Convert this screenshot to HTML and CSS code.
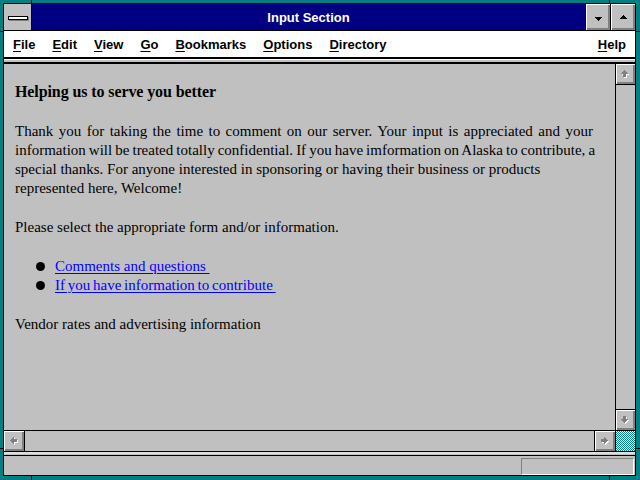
FILE: index.html
```html
<!DOCTYPE html>
<html>
<head>
<meta charset="utf-8">
<title>Input Section</title>
<link rel="stylesheet" href="styles.css">
</head>
<body>
<div class="win">
  <span class="notch notch-t1"></span>
  <span class="notch notch-t2"></span>
  <span class="notch notch-b1"></span>
  <span class="notch notch-b2"></span>
  <span class="notch notch-l1"></span>
  <span class="notch notch-l2"></span>
  <span class="notch notch-r1"></span>
  <span class="notch notch-r2"></span>
  <div class="inner">
    <div class="titlebar">
      <div class="sysmenu"><span class="sysbar"></span></div>
      <div class="caption">Input Section</div>
      <div class="tbtn tbtn-min">
        <svg width="7" height="4" viewBox="0 0 7 4" shape-rendering="crispEdges"><polygon points="0,0 7,0 3.5,4" fill="#000"/></svg>
      </div>
      <div class="tbtn tbtn-max">
        <svg width="7" height="4" viewBox="0 0 7 4" shape-rendering="crispEdges"><polygon points="3.5,0 7,4 0,4" fill="#000"/></svg>
      </div>
    </div>
    <div class="menubar">
      <div class="menus">
        <span class="mi"><u>F</u>ile</span>
        <span class="mi"><u>E</u>dit</span>
        <span class="mi"><u>V</u>iew</span>
        <span class="mi"><u>G</u>o</span>
        <span class="mi"><u>B</u>ookmarks</span>
        <span class="mi"><u>O</u>ptions</span>
        <span class="mi"><u>D</u>irectory</span>
      </div>
      <span class="mi help"><u>H</u>elp</span>
    </div>
    <div class="sep"></div>
    <div class="main">
      <div class="content">
        <h1 class="heading">Helping us to serve you better</h1>
        <p class="para"><span class="ln ln1">Thank you for taking the time to comment on our server. Your input is appreciated and your</span><br><span class="ln ln2">information will be treated totally confidential. If you have imformation on Alaska to contribute, a</span><br>special thanks. For anyone interested in sponsoring or having their business or products<br>represented here, Welcome!</p>
        <p class="para">Please select the appropriate form and/or information.</p>
        <ul class="links">
          <li><span class="dot"></span><a href="#">Comments and questions&nbsp;</a></li>
          <li><span class="dot"></span><a href="#" class="tight">If you have information to contribute&nbsp;</a></li>
        </ul>
        <p class="para">Vendor rates and advertising information</p>
      </div>
      <div class="vscroll">
        <div class="sbtn sbtn-v">
          <svg width="9" height="9" viewBox="0 0 9 9" shape-rendering="crispEdges"><polygon transform="translate(1,1)" points="3.5,0 7,4 5,4 5,7 2,7 2,4 0,4" fill="#fff"/><polygon points="3.5,0 7,4 5,4 5,7 2,7 2,4 0,4" fill="#808080"/></svg>
        </div>
        <div class="vtrack"></div>
        <div class="sbtn sbtn-v sbtn-down">
          <svg width="9" height="9" viewBox="0 0 9 9" shape-rendering="crispEdges"><polygon transform="translate(1,1)" points="2,0 5,0 5,3 7,3 3.5,7 0,3 2,3" fill="#fff"/><polygon points="2,0 5,0 5,3 7,3 3.5,7 0,3 2,3" fill="#808080"/></svg>
        </div>
      </div>
    </div>
    <div class="hscroll">
      <div class="sbtn sbtn-h sbtn-left">
        <svg width="9" height="9" viewBox="0 0 9 9" shape-rendering="crispEdges"><polygon transform="translate(1,1)" points="0,3.5 4,0 4,2 7,2 7,5 4,5 4,7" fill="#fff"/><polygon points="0,3.5 4,0 4,2 7,2 7,5 4,5 4,7" fill="#808080"/></svg>
      </div>
      <div class="htrack"></div>
      <div class="sbtn sbtn-h sbtn-right">
        <svg width="9" height="9" viewBox="0 0 9 9" shape-rendering="crispEdges"><polygon transform="translate(1,1)" points="7,3.5 3,0 3,2 0,2 0,5 3,5 3,7" fill="#fff"/><polygon points="7,3.5 3,0 3,2 0,2 0,5 3,5 3,7" fill="#808080"/></svg>
      </div>
      <div class="corner"></div>
    </div>
    <div class="sep2"></div>
    <div class="status">
      <div class="statbox"></div>
    </div>
  </div>
</div>
</body>
</html>
```

FILE: styles.css
```css
html, body {
  margin: 0;
  padding: 0;
  background: #008080;
}

.win {
  position: relative;
  width: 640px;
  height: 480px;
  box-sizing: border-box;
  padding: 3px 4px 4px 3px;
  background: #008080;
}

.notch {
  position: absolute;
  background: #000;
}
.notch-t1 { left: 31px; top: 0; width: 1px; height: 3px; }
.notch-t2 { left: 609px; top: 0; width: 1px; height: 3px; }
.notch-b1 { left: 31px; bottom: 0; width: 1px; height: 4px; }
.notch-b2 { left: 609px; bottom: 0; width: 1px; height: 4px; }
.notch-l1 { left: 0; top: 31px; width: 3px; height: 1px; }
.notch-l2 { left: 0; top: 448px; width: 3px; height: 1px; }
.notch-r1 { right: 0; top: 31px; width: 4px; height: 1px; }
.notch-r2 { right: 0; top: 448px; width: 4px; height: 1px; }

.inner {
  height: 100%;
  box-sizing: border-box;
  border: 1px solid #000;
  background: #c0c0c0;
  display: flex;
  flex-direction: column;
}

/* Title bar */
.titlebar {
  height: 26px;
  border-bottom: 1px solid #000;
  background: #000080;
  display: flex;
  flex: none;
}
.sysmenu {
  width: 27px;
  border-right: 1px solid #000;
  background: #c0c0c0;
  display: flex;
  align-items: center;
  justify-content: center;
}
.sysbar {
  width: 18px;
  height: 2px;
  background: #fff;
  border: 1px solid #000;
  box-shadow: 1px 1px 0 #808080;
  margin-top: 1px;
}
.caption {
  flex: 1;
  color: #fff;
  font-family: "Liberation Sans", Arial, sans-serif;
  font-weight: bold;
  font-size: 13px;
  padding-top: 2px;
  line-height: 24px;
  text-align: center;
}
.tbtn {
  width: 24px;
  border-left: 1px solid #000;
  background: #c0c0c0;
  box-shadow: inset 1px 1px #fff, inset -1px -1px #808080, inset -2px -2px #808080;
  display: flex;
  align-items: center;
  justify-content: center;
}
.tbtn svg { display: block; }
.tbtn-min svg { margin-top: 3px; }
.tbtn-max svg { margin-top: -1px; }

/* Menu bar */
.menubar {
  height: 26px;
  flex: none;
  background: #fff;
  display: flex;
  justify-content: space-between;
  align-items: center;
  padding: 0 9px 0 9px;
  font-family: "Liberation Sans", Arial, sans-serif;
  font-weight: bold;
  font-size: 13px;
  color: #000;
}
.menus {
  display: flex;
  gap: 17px;
}
.mi u {
  text-decoration-thickness: 1px;
  text-underline-offset: 2px;
}

.sep {
  flex: none;
  height: 3px;
  border-top: 2px solid #000;
  border-bottom: 2px solid #000;
  background: #c0c0c0;
  box-shadow: inset 0 1px #fff;
}

/* Main area */
.main {
  flex: 1;
  display: flex;
  min-height: 0;
}
.content {
  flex: 1;
  overflow: hidden;
  padding: 18px 0 0 11px;
  font-family: "Liberation Serif", "Times New Roman", serif;
  font-size: 15px;
  line-height: 19px;
  color: #000;
  white-space: nowrap;
}
.heading {
  margin: 0 0 21px;
  font-size: 16px;
  font-weight: bold;
  line-height: 19px;
  letter-spacing: -0.1px;
}
.para {
  margin: 0 0 20px;
}
.ln1 {
  word-spacing: 1.7px;
}
.ln2 {
  word-spacing: -0.7px;
}
.links {
  list-style: none;
  margin: 0 0 20px;
  padding: 0 0 0 21px;
}
.links li {
  display: flex;
  align-items: center;
  height: 19px;
}
.dot {
  width: 9px;
  height: 9px;
  border-radius: 50%;
  background: #000;
  margin-right: 10px;
}
.links a {
  color: #0000ff;
  text-decoration: underline;
  text-decoration-thickness: 1px;
  text-underline-offset: 2px;
}
.links a.tight {
  word-spacing: -1px;
}

.vscroll {
  width: 19px;
  border-left: 1px solid #000;
  display: flex;
  flex-direction: column;
}
.vtrack {
  flex: 1;
  background: #c0c0c0;
}
.sbtn {
  background: #c0c0c0;
  box-shadow: inset 1px 1px #fff, inset -1px -1px #808080, inset -2px -2px #808080;
  display: flex;
  align-items: center;
  justify-content: center;
  flex: none;
}
.sbtn svg { display: block; }
.sbtn-v {
  height: 20px;
  border-bottom: 1px solid #000;
}
.sbtn-down {
  border-bottom: none;
  border-top: 1px solid #000;
}

.hscroll {
  flex: none;
  height: 20px;
  border-top: 1px solid #000;
  border-bottom: 1px solid #000;
  display: flex;
}
.htrack {
  flex: 1;
  background: #c0c0c0;
}
.sbtn-h {
  width: 20px;
}
.sbtn-left {
  border-right: 1px solid #000;
}
.sbtn-right {
  border-left: 1px solid #000;
  border-right: 1px solid #000;
}
.corner {
  width: 19px;
  background-image: repeating-conic-gradient(#008080 0 25%, #fff 0 50%);
  background-size: 2px 2px;
}

.sep2 {
  flex: none;
  height: 3px;
  border-bottom: 1px solid #000;
  background: #c0c0c0;
  box-shadow: inset 0 2px #dfdfdf, inset 0 1px #fff;
}

.status {
  flex: none;
  height: 19px;
  display: flex;
  justify-content: flex-end;
  align-items: flex-end;
}
.statbox {
  width: 111px;
  height: 15px;
  margin-right: 1px;
  border-top: 1px solid #808080;
  border-left: 1px solid #808080;
  border-bottom: 1px solid #fff;
  border-right: 1px solid #fff;
}
```
